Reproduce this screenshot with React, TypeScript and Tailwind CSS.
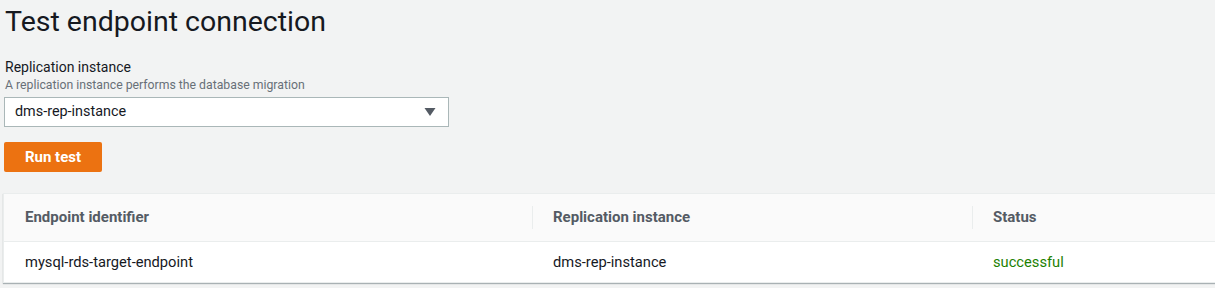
import React from "react";

export default function App() {
  return (
    <div
      className="min-h-[288px] w-[1215px] overflow-hidden bg-[#f2f3f3] text-[#16191f]"
      style={{ fontFamily: "Roboto, 'Open Sans', Arial, sans-serif" }}
    >
      <h1 className="pl-[5px] pt-[4px] text-[28.5px] leading-[36px] font-normal text-[#16191f]">
        Test endpoint connection
      </h1>
      <div className="pl-[4px] pt-[17px]">
        <div className="pl-[1px] text-[14px] leading-[20px] text-[#16191f]">Replication instance</div>
        <div className="pl-[1px] text-[12.25px] leading-[16px] text-[#687078]">
          A replication instance performs the database migration
        </div>
        <div className="mt-[4px] flex h-[30px] w-[445px] items-center justify-between border border-[#aab7b8] bg-white pl-[10px] pr-[12px]">
          <span className="text-[14.4px] text-[#16191f]">dms-rep-instance</span>
          <svg width="12" height="10" viewBox="0 0 12 10">
            <path d="M0.5 1 L11.5 1 L6 9 Z" fill="#545b64" />
          </svg>
        </div>
        <button className="mt-[15px] flex h-[30px] w-[98px] items-center justify-center rounded-[2px] bg-[#ec7211] text-[15px] font-bold text-white">
          Run test
        </button>
      </div>
      <div className="ml-[3px] mt-[21px] w-[1230px] border border-[#eaeded] bg-white shadow-[0_1px_1px_0_rgba(0,28,36,0.3)]">
        <div className="flex h-[48px] items-center border-b border-[#eaeded] bg-[#fafafa] text-[15px] font-bold text-[#545b64]">
          <div className="w-[528px] pl-[21px]">Endpoint identifier</div>
          <div className="h-[23px] w-px bg-[#eaeded]" />
          <div className="w-[439px] pl-[20px]">Replication instance</div>
          <div className="h-[23px] w-px bg-[#eaeded]" />
          <div className="flex-1 pl-[20px]">Status</div>
        </div>
        <div className="flex h-[40px] items-center text-[14.7px] text-[#16191f]">
          <div className="w-[529px] pl-[21px]">mysql-rds-target-endpoint</div>
          <div className="w-[440px] pl-[20px]">dms-rep-instance</div>
          <div className="flex-1 pl-[20px] text-[#1d8102]">successful</div>
        </div>
      </div>
    </div>
  );
}
